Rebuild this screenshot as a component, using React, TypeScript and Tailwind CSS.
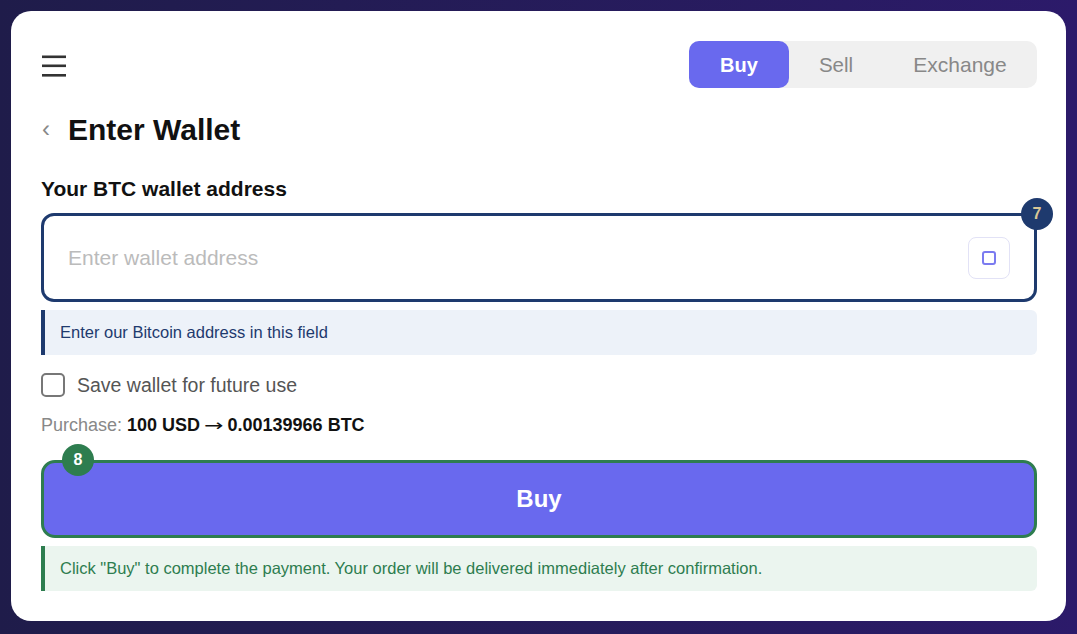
import React from "react";

export default function App() {
  return (
    <div
      className="w-[1077px] h-[634px] p-[11px] bg-gradient-to-r from-[#1f1c4a] to-[#2c1a6a]"
      style={{ fontFamily: '"Liberation Sans", Arial, sans-serif' }}
    >
      <div className="bg-white rounded-[20px] h-[610px] pl-[30px] pr-[29px] pt-[30px]">
        {/* header */}
        <div className="flex items-center justify-between h-[47px]">
          <svg width="24" height="24" viewBox="0 0 24 24" className="ml-[1px]">
            <rect x="0" y="2.5" width="24" height="2.6" fill="#333" />
            <rect x="0" y="11.5" width="24" height="2.6" fill="#333" />
            <rect x="0" y="21" width="24" height="2.6" fill="#333" />
          </svg>
          <div className="flex h-[47px] bg-[#f0f0f0] rounded-[10px]">
            <div className="flex items-center justify-center w-[100px] bg-[#6969ee] rounded-[10px] text-white font-bold text-[20px] leading-[24px]">
              Buy
            </div>
            <div className="flex items-center justify-center w-[94px] text-[#888] text-[20.5px] leading-[24px] pt-[1px]">Sell</div>
            <div className="flex items-center justify-center w-[154px] text-[#888] text-[21px] leading-[24px]">Exchange</div>
          </div>
        </div>

        {/* title */}
        <div className="flex items-center mt-[24px] h-[36px]">
          <span className="text-[24px] text-[#888] leading-none ml-[1px] mt-[-2px]">‹</span>
          <h1 className="ml-[18px] text-[30px] font-bold text-[#111] leading-[36px]">Enter Wallet</h1>
        </div>

        <div className="mt-[29px] text-[21px] font-bold text-[#111] leading-[24px]">Your BTC wallet address</div>

        {/* input */}
        <div className="relative mt-[12px]">
          <div className="h-[89px] border-[3px] border-[#1e3a6e] rounded-[13px] flex items-center pl-[24px] pr-[24px]">
            <span className="flex-1 text-[21px] text-[#bbb]">Enter wallet address</span>
            <div className="w-[42px] h-[42px] border border-[#e2e2f6] rounded-[8px] flex items-center justify-center">
              <div className="w-[14px] h-[14px] border-2 border-[#7b7bf0] rounded-[3px]" />
            </div>
          </div>
          <div className="absolute right-[-16px] top-[-15px] w-[32px] h-[32px] rounded-full bg-[#1e3a6e] flex items-center justify-center text-[#d8c796] font-bold text-[16px]">
            7
          </div>
        </div>

        <div className="mt-[8px] h-[45px] bg-[#edf2f9] border-l-4 border-[#1e3a6e] rounded-r-[6px] flex items-center pl-[15px] text-[16.5px] text-[#1e3a6e]">
          Enter our Bitcoin address in this field
        </div>

        <div className="mt-[18px] flex items-center">
          <div className="w-[24px] h-[24px] border-2 border-[#777] rounded-[5px]" />
          <span className="ml-[12px] text-[19.5px] text-[#555] leading-[24px]">Save wallet for future use</span>
        </div>

        <div className="mt-[17px] text-[18px] leading-[22px]">
          <span className="text-[#888]">Purchase: </span>
          <span className="font-bold text-[#111]">
            100 USD{" "}
            <span
              style={{ fontFamily: '"DejaVu Sans", sans-serif' }}
              className="inline-block font-normal text-[16px] scale-x-[1.45] mx-[2px]"
            >
              →
            </span>{" "}
            0.00139966 BTC
          </span>
        </div>

        {/* buy button */}
        <div className="relative mt-[23px]">
          <div className="h-[78px] bg-[#6969ee] border-[3px] border-[#2e7d4f] rounded-[14px] flex items-center justify-center text-white font-bold text-[24px]">
            Buy
          </div>
          <div className="absolute left-[21px] top-[-16px] w-[32px] h-[32px] rounded-full bg-[#2e7d4f] flex items-center justify-center text-white font-bold text-[16px]">
            8
          </div>
        </div>

        <div className="mt-[8px] h-[45px] bg-[#ebf5ef] border-l-4 border-[#2e7d4f] rounded-r-[6px] flex items-center pl-[15px] text-[16.5px] text-[#2e7d4f]">
          Click "Buy" to complete the payment. Your order will be delivered immediately after confirmation.
        </div>
      </div>
    </div>
  );
}
